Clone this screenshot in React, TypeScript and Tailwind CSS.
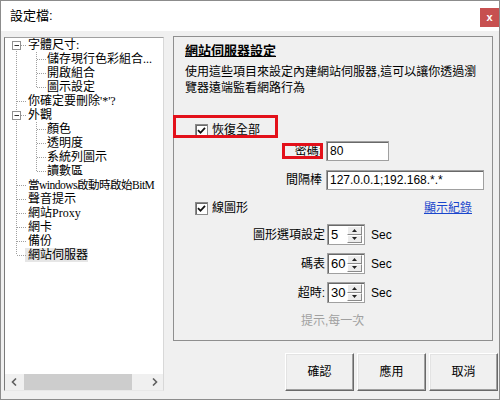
import React from "react";

const ui = { fontFamily: '"Liberation Sans", "Noto Sans CJK TC", sans-serif' };
const treeFont = { fontFamily: '"Liberation Serif", "Noto Sans CJK TC", serif' };

const tree = [
  { t: "字體尺寸:", lvl: 0, box: true },
  { t: "儲存現行色彩組合...", lvl: 1 },
  { t: "開啟組合", lvl: 1 },
  { t: "圖示設定", lvl: 1 },
  { t: "你確定要刪除'*'?", lvl: 0 },
  { t: "外觀", lvl: 0, box: true },
  { t: "顏色", lvl: 1 },
  { t: "透明度", lvl: 1 },
  { t: "系統列圖示", lvl: 1 },
  { t: "讀數區", lvl: 1 },
  { t: "當windows啟動時啟始BitM", lvl: 0, tight: true },
  { t: "聲音提示", lvl: 0 },
  { t: "網站Proxy", lvl: 0 },
  { t: "網卡", lvl: 0 },
  { t: "備份", lvl: 0 },
  { t: "網站伺服器", lvl: 0, sel: true },
];

const c = (i: number) => 7 + 14 * i;

function TreeLines() {
  const dot = { stroke: "#a0a0a0", strokeDasharray: "1 1", strokeWidth: 1 };
  return (
    <svg className="absolute left-0 top-0 pointer-events-none" width="160" height="240">
      <line x1="11.5" y1={c(0)} x2="11.5" y2={c(15)} {...dot} />
      <line x1="31.5" y1="14" x2="31.5" y2={c(3)} {...dot} />
      <line x1="31.5" y1="84" x2="31.5" y2={c(9)} {...dot} />
      {tree.map((n, i) =>
        n.lvl === 0 ? (
          <line key={i} x1="12" y1={c(i) + 0.5} x2="21" y2={c(i) + 0.5} {...dot} />
        ) : (
          <line key={i} x1="32" y1={c(i) + 0.5} x2="41" y2={c(i) + 0.5} {...dot} />
        )
      )}
      {tree.map((n, i) =>
        n.box ? (
          <g key={"b" + i}>
            <rect x="7.5" y={c(i) - 3.5} width="8" height="8" fill="#fff" stroke="#919191" />
            <line x1="9.5" y1={c(i) + 0.5} x2="14" y2={c(i) + 0.5} stroke="#333" />
          </g>
        ) : null
      )}
    </svg>
  );
}

function Check() {
  return (
    <span className="w-[13px] h-[13px] shrink-0 border border-[#8a8a8a] bg-white shadow-[inset_1px_1px_0_#6a6a6a] flex items-center justify-center">
      <svg width="9" height="9" viewBox="0 0 9 9">
        <path d="M1 4.2 L3.5 6.8 L8 1.8" stroke="#111" strokeWidth="1.8" fill="none" />
      </svg>
    </span>
  );
}

function Spin({ value }: { value: string }) {
  return (
    <div className="w-[38px] h-[21px] flex items-center bg-white border border-[#a0a0a0] shadow-[inset_1px_1px_0_#696969] pl-[3px] pr-[2px]">
      <span className="flex-1 text-[13px] leading-none">{value}</span>
      <div className="flex flex-col w-[15px] h-[17px]">
        <div className="flex-1 flex items-center justify-center bg-[#ececec] border border-t-white border-l-white border-r-[#8a8a8a] border-b-[#8a8a8a]">
          <svg width="5" height="3" viewBox="0 0 5 3"><path d="M2.5 0 L5 3 L0 3 Z" fill="#222" /></svg>
        </div>
        <div className="flex-1 flex items-center justify-center bg-[#ececec] border border-t-white border-l-white border-r-[#8a8a8a] border-b-[#8a8a8a]">
          <svg width="5" height="3" viewBox="0 0 5 3"><path d="M0 0 L5 0 L2.5 3 Z" fill="#222" /></svg>
        </div>
      </div>
    </div>
  );
}

function Btn({ label }: { label: string }) {
  return (
    <button className="w-[69px] h-[38px] bg-[#f0f0f0] text-[12px] text-black border border-t-white border-l-white border-r-[#696969] border-b-[#696969] shadow-[inset_-1px_-1px_0_#a0a0a0,inset_1px_1px_0_#e3e3e3]">
      {label}
    </button>
  );
}

export default function App() {
  return (
    <div style={ui} className="w-[500px] h-[400px] border border-[#8c8c8c] bg-[#f0f0f0] flex flex-col overflow-hidden text-black">
      {/* title bar */}
      <div className="h-[30px] bg-white flex items-start justify-between pl-[9px]">
        <span className="mt-[6px] text-[13px] leading-[18px]">設定檔:</span>
        <div className="mt-[7px] w-[19px] h-[19px] bg-[#c75050] flex items-center justify-center text-white text-[11px] font-bold leading-none">
          x
        </div>
      </div>

      <div className="flex-1 flex pl-[3px] pr-[1px] pt-[6px] pb-[8px] gap-[9px]">
        {/* tree */}
        <div className="w-[160px] flex flex-col bg-white border border-t-[#a0a0a0] border-l-[#7a7a7a] border-r-[#d8d8d8] border-b-[#e8e8e8]">
          <div style={treeFont} className="relative flex-1 overflow-hidden text-[12px]">
            <TreeLines />
            {tree.map((n, i) => (
              <div
                key={i}
                className={
                  "h-[14px] leading-[14px] whitespace-nowrap " +
                  (n.lvl === 0 ? "pl-[23px]" : "pl-[42px]") +
                  (n.tight ? " text-[11.5px] tracking-[-0.5px]" : "")
                }
              >
                {n.sel ? <span className="bg-[#e6e6e6] -ml-[3px] pl-[3px] inline-block">{n.t}</span> : n.t}
              </div>
            ))}
          </div>
          <div className="h-[16px] flex bg-[#f0f0f0]">
            <div className="w-[17px] flex items-center justify-center">
              <svg width="6" height="8" viewBox="0 0 6 8"><path d="M5 0.5 L1.5 4 L5 7.5" stroke="#606060" strokeWidth="1.6" fill="none" /></svg>
            </div>
            <div className="flex-1 flex items-stretch">
              <div className="ml-[2px] w-[108px] bg-[#cdcdcd]" />
            </div>
            <div className="w-[17px] flex items-center justify-center">
              <svg width="6" height="8" viewBox="0 0 6 8"><path d="M1 0.5 L4.5 4 L1 7.5" stroke="#606060" strokeWidth="1.6" fill="none" /></svg>
            </div>
          </div>
        </div>

        {/* right side */}
        <div className="flex-1 flex flex-col -mt-[1px]">
          <div className="h-[305px] mr-[5px] border border-[#8f8f8f] pl-[11px] pt-[6px] text-[12px]">
            <div className="text-[13px] leading-[16px] font-bold underline">網站伺服器設定</div>
            <div className="mt-[5px] w-[296px] leading-[16px]">
              使用這些項目來設定內建網站伺服器,這可以讓你透過瀏覽器遠端監看網路行為
            </div>

            <div className="relative mt-[24px] h-[20px] flex items-center pl-[10px] gap-[4px]">
              <div className="absolute -left-[12px] -top-[5px] w-[105px] h-[23px] border-[3px] border-[#e3101a]" />
              <Check />
              <span>恢復全部</span>
            </div>

            <div className="mt-[1px] grid grid-cols-[137px_auto] gap-x-[4px] items-center">
              <div className="h-[20px] flex items-center justify-end">
                <span className="relative leading-[16px]">
                  密碼:
                  <span className="absolute -left-[13px] -right-[1px] top-0 bottom-0 border-[3px] border-[#e3101a]" />
                </span>
              </div>
              <div className="w-[63px] h-[20px] bg-white border border-[#a0a0a0] shadow-[inset_1px_1px_0_#696969] pl-[3px] flex items-center text-[12px]">
                80
              </div>
              <div className="mt-[9px] h-[20px] flex items-center justify-end">間隔棒</div>
              <div className="mt-[9px] w-[158px] h-[20px] bg-white border border-[#a0a0a0] shadow-[inset_1px_1px_0_#696969] pl-[3px] flex items-center text-[12px] whitespace-nowrap">
                127.0.0.1;192.168.*.*
              </div>
            </div>

            <div className="mt-[10px] h-[16px] flex items-center justify-between pl-[10px] pr-[20px]">
              <div className="flex items-center gap-[4px]">
                <Check />
                <span>線圖形</span>
              </div>
              <span className="text-[#1a46cc] underline">顯示紀錄</span>
            </div>

            <div className="mt-[8px] flex flex-col gap-[8px]">
              {[
                ["圖形選項設定", "5"],
                ["碼表", "60"],
                ["超時:", "30"],
              ].map(([l, v]) => (
                <div key={l} className="grid grid-cols-[140px_38px_auto] gap-x-[2px] items-center">
                  <span className="text-right">{l}</span>
                  <Spin value={v} />
                  <span
                    style={{ fontFamily: '"Liberation Sans Narrow", "Liberation Sans", sans-serif' }}
                    className="ml-[4px] text-[12px]"
                  >
                    Sec
                  </span>
                </div>
              ))}
            </div>

            <div className="mt-[10px] ml-[116px] leading-[16px] text-[#a0a0a0]">提示,每一次</div>
          </div>

          <div className="mt-[12px] flex justify-end gap-[3px]">
            <Btn label="確認" />
            <Btn label="應用" />
            <Btn label="取消" />
          </div>
        </div>
      </div>
    </div>
  );
}
